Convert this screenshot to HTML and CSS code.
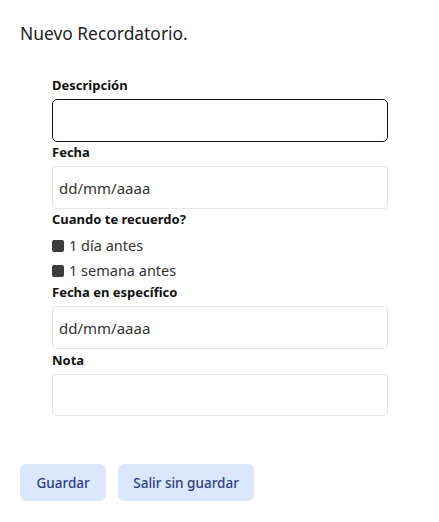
FILE: index.html
```html
<!DOCTYPE html>
<html lang="es">
<head>
<meta charset="utf-8">
<title>Nuevo Recordatorio</title>
<link rel="stylesheet" href="styles.css">
</head>
<body>
<div class="page">
  <h1 class="title">Nuevo Recordatorio.</h1>
  <form class="form">
    <label class="label">Descripción</label>
    <div class="field field-focus"></div>
    <label class="label">Fecha</label>
    <div class="field"><span class="ph">dd/mm/aaaa</span></div>
    <label class="label">Cuando te recuerdo?</label>
    <div class="checks">
      <div class="check"><span class="box"></span><span>1 día antes</span></div>
      <div class="check"><span class="box"></span><span>1 semana antes</span></div>
    </div>
    <label class="label">Fecha en específico</label>
    <div class="field"><span class="ph">dd/mm/aaaa</span></div>
    <label class="label label-nota">Nota</label>
    <div class="field field-nota"></div>
  </form>
  <div class="actions">
    <button type="button" class="btn btn-save">Guardar</button>
    <button type="button" class="btn btn-exit">Salir sin guardar</button>
  </div>
</div>
</body>
</html>
```

FILE: styles.css
```css
* { box-sizing: border-box; }
html, body { margin: 0; padding: 0; background: #fff; }
body {
  font-family: "Noto Sans", "Open Sans", "Liberation Sans", sans-serif;
  color: #212529;
}
.page {
  width: 439px;
  padding: 20px 20px 0 20px;
}
.title {
  margin: 0;
  font-size: 17.4px;
  font-weight: 400;
  line-height: 26px;
  color: #222;
}
.form {
  margin: 30px 0 0 32px;
  width: 336px;
  display: flex;
  flex-direction: column;
}
.label {
  display: block;
  font-size: 13px;
  font-weight: 700;
  line-height: 18px;
  color: #111;
  margin-bottom: 5px;
}
.field {
  height: 43px;
  border: 1px solid #e6e6e6;
  border-radius: 4px;
  display: flex;
  align-items: center;
  padding: 0 6px;
  margin-bottom: 1px;
}
.field-focus {
  border: 1.5px solid #111;
  border-radius: 5px;
}
.ph {
  font-size: 15px;
  color: #333;
}
.checks {
  display: flex;
  flex-direction: column;
}
.check {
  display: flex;
  align-items: center;
  gap: 5px;
  font-size: 14.5px;
  line-height: 25px;
  color: #333;
}
.box {
  width: 12px;
  height: 12px;
  background: #3d3d3d;
  border-radius: 2px;
  flex: none;
}
.label-nota { margin-top: 1px; }
.field-nota { height: 42px; }
.actions {
  display: flex;
  gap: 12px;
  margin-top: 47px;
}
.btn {
  font-family: inherit;
  height: 37px;
  border: none;
  border-radius: 6px;
  background: #dbe8fc;
  color: #2b3d85;
  font-size: 13.5px;
  font-weight: 500;
  padding: 0 16.5px;
}
.btn-exit { padding: 0 15px; }
```
